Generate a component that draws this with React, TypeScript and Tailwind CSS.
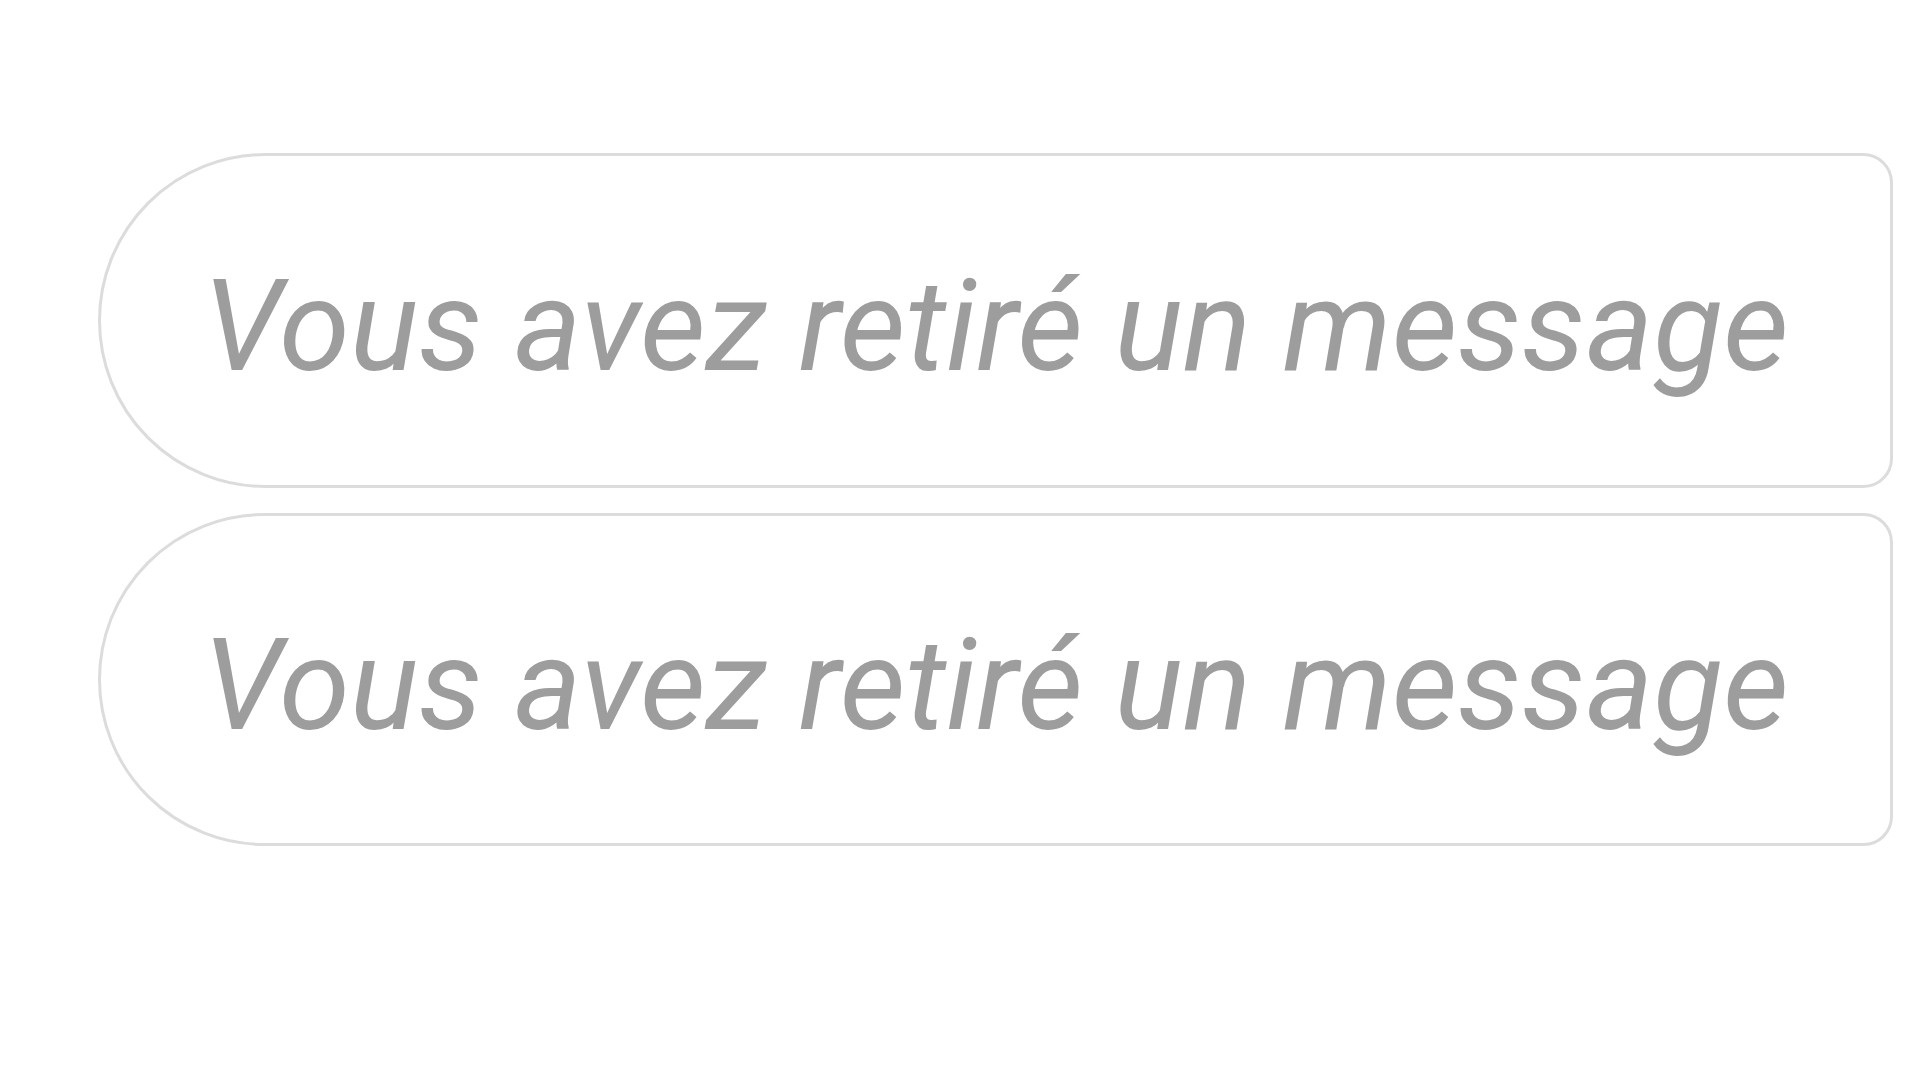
const Bubble = ({ h }: { h: string }) => (
  <div
    className={`ml-[98px] w-[1795px] ${h} flex items-center pl-[102px] pt-[10px] bg-white border-[3px] border-[#dcdcdc] rounded-l-[170px] rounded-r-[30px]`}
  >
    <span
      className="italic text-[128px] leading-none text-[#9d9d9d] whitespace-nowrap"
      style={{ fontFamily: "Roboto, 'Noto Sans', sans-serif" }}
    >
      Vous avez retiré un message
    </span>
  </div>
);

export default function App() {
  return (
    <div className="w-[1920px] h-[1080px] bg-white pt-[153px] flex flex-col gap-[25px] overflow-hidden">
      <Bubble h="h-[335px]" />
      <Bubble h="h-[333px]" />
    </div>
  );
}
